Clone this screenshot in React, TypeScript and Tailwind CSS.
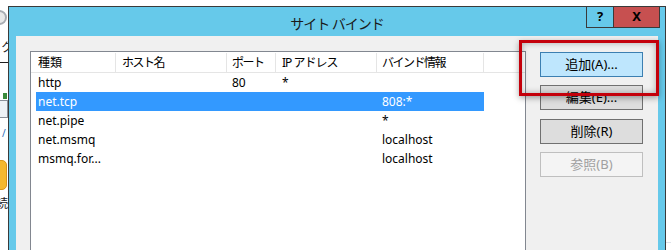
import React from 'react';

const font = "font-['Noto_Sans','Noto_Sans_CJK_JP',sans-serif]";

const headers = [
  { label: '種類', cls: 'w-[85px] pl-[7px]' },
  { label: 'ホスト名', cls: 'w-[111px] pl-[6px] tracking-[-1.5px]' },
  { label: 'ポート', cls: 'w-[49px] pl-[5px] tracking-[-1.5px]' },
  { label: 'IP アドレス', cls: 'w-[101px] pl-[6px] tracking-[-1px]' },
  { label: 'バインド情報', cls: 'w-[107px] pl-[5px] tracking-[-1.5px]' },
];

const colCls = ['w-[80px] pl-[2px]', 'w-[111px]', 'w-[49px] pl-[5px]', 'w-[101px] pl-[6px]', 'w-[107px] pl-[5px]'];

const rows = [
  { cells: ['http', '', '80', '*', ''] },
  { cells: ['net.tcp', '', '', '', '808:*'], selected: true },
  { cells: ['net.pipe', '', '', '', '*'] },
  { cells: ['net.msmq', '', '', '', 'localhost'] },
  { cells: ['msmq.for...', '', '', '', 'localhost'] },
];

function DialogButton({ label, kind, className }: { label: string; kind: 'focus' | 'normal' | 'disabled'; className?: string }) {
  const look =
    kind === 'focus'
      ? 'bg-[#bee6fd] border-[#3c7fb1] text-black'
      : kind === 'normal'
        ? 'bg-[#dddddd] border-[#707070] text-black'
        : 'bg-[#f4f4f4] border-[#bfbfbf] text-[#a0a0a0]';
  return (
    <div className={`w-[103px] h-[25px] shrink-0 border flex items-center justify-center text-[13px] ${look} ${className ?? ''}`}>
      {label}
    </div>
  );
}

function LeftStrip() {
  // bits of the window behind the dialog
  return (
    <div className="w-[8px] h-full shrink-0 overflow-hidden flex flex-col bg-white">
      <div className="mt-[10px] -ml-[8px] w-[15px] h-[15px] shrink-0 rounded-full border-2 border-[#a8acb2] bg-[#e8e8e8]" />
      <div className="mt-[17px] ml-[1px] text-[12px] leading-[12px] text-[#222]">ク</div>
      <div className="mt-[8px] h-px w-full shrink-0 bg-[#1e1e1e]" />
      <div className="mt-[30px] ml-[3px] w-[4px] h-[6px] shrink-0 bg-[#3a8a3a]" />
      <div className="mt-[1px] -ml-[2px] w-[10px] h-[18px] shrink-0 border border-[#8a9099] bg-[#eef2f6]" />
      <div className="mt-[10px] ml-[2px] text-[10px] leading-[10px] text-[#2a6ab8]">/</div>
      <div className="mt-[22px] -ml-[8px] w-[15px] h-[30px] shrink-0 rounded-[5px] bg-[#f5b82e] border border-[#d8961a]" />
      <div className="mt-[8px] -ml-[4px] text-[12px] leading-[12px] text-[#222]">続</div>
    </div>
  );
}

export default function App() {
  return (
    <div className={`w-[671px] h-[250px] overflow-hidden bg-white flex ${font}`}>
      <LeftStrip />

      <div className="mt-[6px] w-[658px] h-[260px] shrink-0 border border-[#3a3a3a] border-b-0 bg-[#66c9ea] flex flex-col">
        {/* title bar */}
        <div className="h-[29px] shrink-0 grid grid-cols-[1fr_auto_1fr]">
          <div />
          <div className="self-center pt-[3px] text-[14px] tracking-[-1px] text-[#1a1a1a]">サイト バインド</div>
          <div className="flex justify-end items-start mr-[5px]">
            <div className="flex h-[21px] border-x border-b border-[#3a3a3a]">
              <div className="w-[27px] border-r border-[#3a3a3a] flex items-center justify-center text-[13px] font-bold text-black">?</div>
              <div className="w-[45px] bg-[#c75050] flex items-center justify-center text-[13px] font-bold text-black">X</div>
            </div>
          </div>
        </div>

        {/* client area */}
        <div className="relative mx-[7px] flex-1 min-h-0 bg-[#f0f0f0] flex pl-[14px] pt-[15px]">
          <div className="w-[496px] h-[230px] shrink-0 border border-[#828790] bg-white pt-px flex flex-col">
            <div className="flex h-[20px] shrink-0 border-b border-[#e5e5e5] text-[12px] text-black">
              {headers.map((h) => (
                <div key={h.label} className={`${h.cls} shrink-0 border-r border-[#e5e5e5] flex items-center whitespace-nowrap`}>
                  {h.label}
                </div>
              ))}
              <div className="flex-1" />
            </div>
            {rows.map((r) => (
              <div
                key={r.cells[0]}
                className={`ml-[5px] w-[448px] h-[19px] shrink-0 flex items-center text-[12px] ${r.selected ? 'bg-[#3399ff] text-white' : 'text-black'}`}
              >
                {r.cells.map((c, i) => (
                  <div key={i} className={`${colCls[i]} shrink-0 whitespace-nowrap`}>
                    {c}
                  </div>
                ))}
              </div>
            ))}
          </div>

          <div className="ml-[14px] pt-px flex flex-col">
            <DialogButton label="追加(A)..." kind="focus" />
            <DialogButton label="編集(E)..." kind="normal" className="mt-[8px]" />
            <DialogButton label="削除(R)" kind="normal" className="mt-[9px]" />
            <DialogButton label="参照(B)" kind="disabled" className="mt-[8px]" />
          </div>

          {/* red highlight drawn over the screenshot */}
          <div className="absolute left-[503px] top-[4px] w-[140px] h-[56px] border-[3px] border-[#c4000b] shadow-[0_2px_6px_rgba(0,0,0,0.35),inset_0_0_6px_rgba(0,0,0,0.3)]" />
        </div>
      </div>

      <div className="flex-1 h-full bg-white flex flex-col">
        <div className="mt-[242px] h-px w-full shrink-0 bg-[#dfe3ea]" />
      </div>
    </div>
  );
}
